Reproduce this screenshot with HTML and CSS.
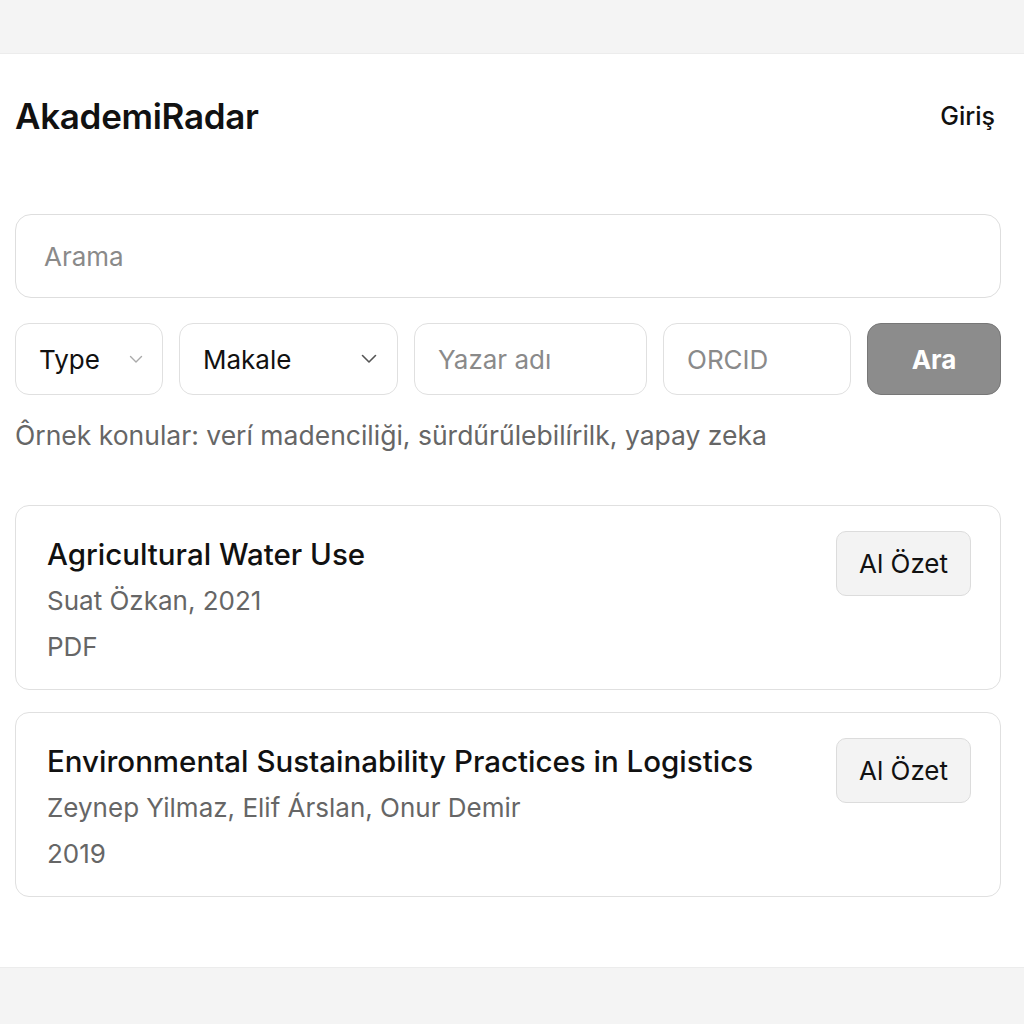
FILE: index.html
```html
<!DOCTYPE html>
<html lang="tr">
<head>
<meta charset="utf-8">
<title>AkademiRadar</title>
<link rel="stylesheet" href="styles.css">
</head>
<body>
<div class="band"></div>
<main class="page">
  <header class="header">
    <h1 class="brand">AkademiRadar</h1>
    <a class="login" href="#">Giriş</a>
  </header>

  <div class="search">Arama</div>

  <div class="filters">
    <div class="field select type">
      <span>Type</span>
      <svg class="chev light" width="14" height="9" viewBox="0 0 14 9"><path d="M1.5 1.5 L7 7 L12.5 1.5" fill="none" stroke="currentColor" stroke-width="1.4" stroke-linecap="round" stroke-linejoin="round"/></svg>
    </div>
    <div class="field select makale">
      <span>Makale</span>
      <svg class="chev" width="16" height="10" viewBox="0 0 16 10"><path d="M1.5 1.5 L8 8 L14.5 1.5" fill="none" stroke="currentColor" stroke-width="1.6" stroke-linecap="round" stroke-linejoin="round"/></svg>
    </div>
    <div class="field input author">Yazar adı</div>
    <div class="field input orcid">ORCID</div>
    <button class="search-btn">Ara</button>
  </div>

  <p class="hint">Ôrnek konular: verí madenciliği, sürdűrűlebilírilk, yapay zeka</p>

  <section class="results">
    <article class="card">
      <div class="card-body">
        <h2 class="card-title">Agricultural Water Use</h2>
        <div class="meta">Suat Özkan, 2021</div>
        <div class="meta">PDF</div>
      </div>
      <button class="summary-btn">Al Özet</button>
    </article>
    <article class="card">
      <div class="card-body">
        <h2 class="card-title">Environmental Sustainability Practices in Logistics</h2>
        <div class="meta">Zeynep Yilmaz, Elif Árslan, Onur Demir</div>
        <div class="meta">2019</div>
      </div>
      <button class="summary-btn">Al Özet</button>
    </article>
  </section>
</main>
<div class="band bottom"></div>
</body>
</html>
```

FILE: styles.css
```css
* { box-sizing: border-box; }
html, body { margin: 0; padding: 0; }
body {
  font-family: Inter, "Noto Sans", "Liberation Sans", sans-serif;
  background: #f4f4f4;
  color: #111;
}
.band {
  height: 54px;
  background: #f4f4f4;
  border-bottom: 1px solid #ececec;
}
.band.bottom {
  height: 56px;
  border-bottom: none;
  border-top: 1px solid #ececec;
}
.page {
  background: #fff;
  height: 913px;
  padding: 42px 23px 0 15px;
}
.header {
  display: flex;
  justify-content: space-between;
  align-items: center;
  height: 40px;
}
.brand {
  margin: 0;
  font-size: 35px;
  font-weight: 600;
  letter-spacing: -0.3px;
  line-height: 40px;
}
.login {
  color: #111;
  text-decoration: none;
  font-size: 25px;
  font-weight: 500;
  margin-right: 6px;
}
.search {
  margin-top: 78px;
  height: 84px;
  border: 1px solid #dedede;
  border-radius: 16px;
  display: flex;
  align-items: center;
  padding-left: 28px;
  font-size: 26px;
  color: #8a8a8a;
}
.filters {
  margin-top: 25px;
  display: flex;
  gap: 16px;
  height: 72px;
}
.field {
  height: 72px;
  border: 1px solid #e0e0e0;
  border-radius: 14px;
  display: flex;
  align-items: center;
  font-size: 26px;
  padding-left: 23px;
  padding-right: 20px;
}
.select { justify-content: space-between; color: #111; }
.type { width: 148px; padding-right: 19px; }
.makale { width: 219px; padding-right: 20px; }
.chev { color: #555; }
.chev.light { color: #aaa; }
.input { color: #8a8a8a; }
.author { width: 233px; }
.orcid { width: 188px; }
.search-btn {
  flex: 1;
  height: 72px;
  border: 1px solid #777;
  border-radius: 14px;
  background: #8c8c8c;
  color: #fff;
  font-family: inherit;
  font-size: 26px;
  font-weight: 700;
}
.hint {
  margin: 24px 0 0;
  font-size: 26.5px;
  line-height: 32px;
  color: #666;
}
.results {
  margin-top: 54px;
  display: flex;
  flex-direction: column;
  gap: 22px;
}
.card {
  border: 1px solid #e0e0e0;
  border-radius: 14px;
  padding: 25px 29px 19px 31px;
  display: flex;
  justify-content: space-between;
  align-items: flex-start;
  height: 185px;
}
.card-title {
  margin: 6px 0 6px;
  font-size: 29.5px;
  font-weight: 500;
  line-height: 35px;
  color: #111;
}
.meta {
  font-size: 26px;
  line-height: 46px;
  color: #666;
}
.summary-btn {
  width: 135px;
  height: 65px;
  border: 1px solid #dcdcdc;
  border-radius: 10px;
  background: #f3f3f3;
  color: #111;
  font-family: inherit;
  font-size: 26px;
  flex-shrink: 0;
}
```
